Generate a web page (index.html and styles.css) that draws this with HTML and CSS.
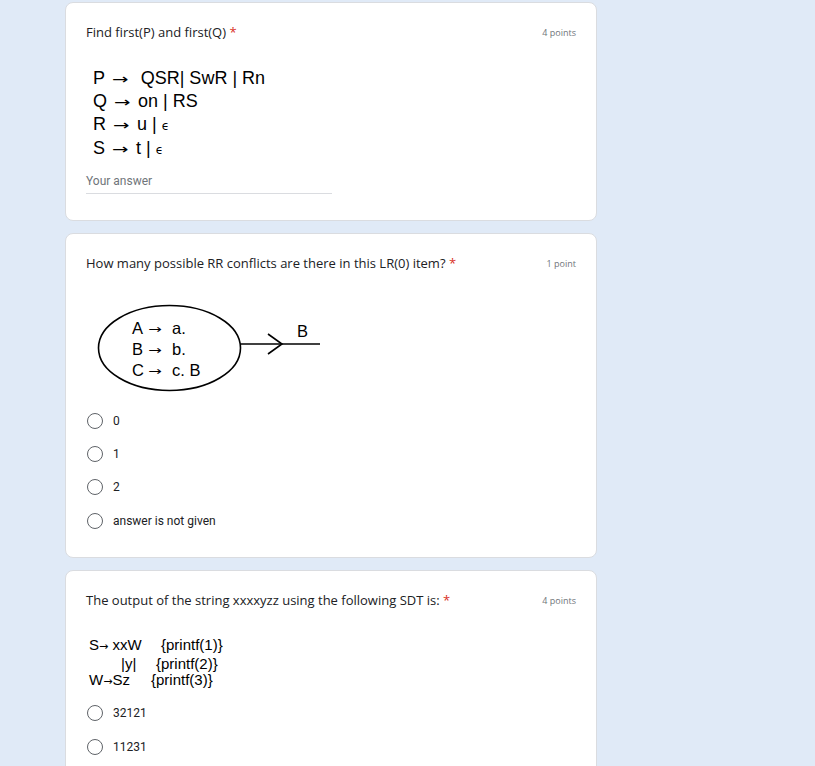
FILE: index.html
```html
<!DOCTYPE html>
<html lang="en">
<head>
  <meta charset="UTF-8">
  <title>Quiz</title>
  <link rel="stylesheet" href="styles.css">
</head>
<body>
  <div class="form">

    <!-- Question 1 -->
    <div class="card">
      <div class="q-head">
        <div class="q-title">Find first(P) and first(Q) <span class="req">*</span></div>
        <div class="q-points">4 points</div>
      </div>
      <div class="grammar">
        <div class="g-line">P <span class="arr"><span class="arr-glyph">→</span></span>  QSR| SwR | Rn</div>
        <div class="g-line">Q <span class="arr"><span class="arr-glyph">→</span></span> on | RS</div>
        <div class="g-line">R <span class="arr"><span class="arr-glyph">→</span></span> u | <span class="eps">ϵ</span></div>
        <div class="g-line">S <span class="arr"><span class="arr-glyph">→</span></span> t | <span class="eps">ϵ</span></div>
      </div>
      <div class="answer">Your answer</div>
    </div>

    <!-- Question 2 -->
    <div class="card">
      <div class="q-head">
        <div class="q-title">How many possible RR conflicts are there in this LR(0) item? <span class="req">*</span></div>
        <div class="q-points">1 point</div>
      </div>
      <svg class="diagram" width="240" height="100" viewBox="0 0 240 100">
        <ellipse cx="83.5" cy="48" rx="71" ry="42.5" fill="none" stroke="#000" stroke-width="1.6"/>
        <text x="46" y="34">A</text>
        <text class="d-arr" transform="translate(62 33) scale(1.35 1)">→</text>
        <text x="86" y="34">a.</text>
        <text x="46" y="55">B</text>
        <text class="d-arr" transform="translate(62 54) scale(1.35 1)">→</text>
        <text x="86" y="55">b.</text>
        <text x="46" y="76">C</text>
        <text class="d-arr" transform="translate(62 75) scale(1.35 1)">→</text>
        <text x="86" y="76">c. B</text>
        <line x1="155" y1="44" x2="234" y2="44" stroke="#000" stroke-width="1.6"/>
        <polyline points="182,34 196,44 182,54" fill="none" stroke="#000" stroke-width="1.6"/>
        <text x="211" y="37">B</text>
      </svg>
      <div class="options">
        <label class="option"><span class="radio"></span>0</label>
        <label class="option"><span class="radio"></span>1</label>
        <label class="option"><span class="radio"></span>2</label>
        <label class="option"><span class="radio"></span>answer is not given</label>
      </div>
    </div>

    <!-- Question 3 -->
    <div class="card">
      <div class="q-head">
        <div class="q-title">The output of the string xxxxyzz using the following SDT is: <span class="req">*</span></div>
        <div class="q-points">4 points</div>
      </div>
      <div class="sdt">
        <div><span class="lhs w1">S<span class="arr-s">→</span> xxW</span>{printf(1)}</div>
        <div><span class="lhs w2">|y|</span>{printf(2)}</div>
        <div><span class="lhs w3">W<span class="arr-s">→</span>Sz</span>{printf(3)}</div>
      </div>
      <div class="options options-sdt">
        <label class="option"><span class="radio"></span>32121</label>
        <label class="option"><span class="radio"></span>11231</label>
      </div>
    </div>

  </div>
</body>
</html>
```

FILE: styles.css
```css
body {
  margin: 0;
  background-color: #e0eaf7;
  font-family: Roboto, Arial, sans-serif;
  color: #202124;
}

.form {
  width: 532px;
  margin-left: 65px;
  padding-top: 2px;
  display: flex;
  flex-direction: column;
  gap: 12px;
}

.card {
  background-color: #fff;
  border: 1px solid #dadce0;
  border-radius: 8px;
  padding: 19px 20px 20px 20px;
}

.q-head {
  display: flex;
  justify-content: space-between;
  align-items: center;
  height: 20px;
}

.q-title {
  font-family: "Open Sans", Roboto, sans-serif;
  font-size: 13px;
  color: #202124;
}

.req {
  color: #d93025;
}

.q-points {
  font-family: "Open Sans", Roboto, sans-serif;
  font-size: 9px;
  color: #70757a;
}

/* grammar picture in question 1 */
.grammar {
  margin-top: 25px;
  padding-left: 7px;
  font-family: "Liberation Sans", Arial, sans-serif;
  font-size: 18px;
  line-height: 22px;
  color: #000;
}

.g-line {
  white-space: pre;
}

.arr {
  display: inline-block;
  width: 21px;
  padding-left: 2px;
  box-sizing: border-box;
}

.arr-glyph {
  display: inline-block;
  font-family: "DejaVu Sans", sans-serif;
  font-size: 14px;
  transform: scaleX(1.4);
  transform-origin: left center;
}

.eps {
  font-family: "DejaVu Sans", sans-serif;
  font-size: 12px;
}

.answer {
  margin-top: 11px;
  width: 246px;
  height: 21px;
  border-bottom: 1px solid #dadce0;
  font-size: 12px;
  line-height: 18px;
  color: #70757a;
}

.card:first-child {
  padding-bottom: 26px;
}

/* LR(0) item picture */
.diagram {
  display: block;
  margin-top: 27px;
  font-family: "Liberation Sans", Arial, sans-serif;
  font-size: 16.5px;
}

.d-arr {
  font-family: "DejaVu Sans", sans-serif;
  font-size: 12px;
}

.options {
  margin-top: 4px;
  display: flex;
  flex-direction: column;
}

.option {
  display: flex;
  align-items: center;
  height: 33.3px;
  font-size: 12px;
  color: #202124;
}

.radio {
  width: 14px;
  height: 14px;
  border: 1.3px solid #5f6368;
  border-radius: 50%;
  margin-left: 1px;
  margin-right: 10px;
}

/* SDT picture in question 3 */
.sdt {
  margin-top: 27px;
  padding-left: 3px;
  font-family: "Liberation Sans", Arial, sans-serif;
  font-size: 15px;
  line-height: 16.5px;
  color: #000;
}

.lhs {
  display: inline-block;
}

.arr-s {
  font-family: "DejaVu Sans", sans-serif;
  font-size: 11px;
}

.w1 { width: 72px; }
.w2 { width: 35px; padding-left: 32px; }
.w3 { width: 62px; }

.options-sdt {
  margin-top: 6px;
}
```
